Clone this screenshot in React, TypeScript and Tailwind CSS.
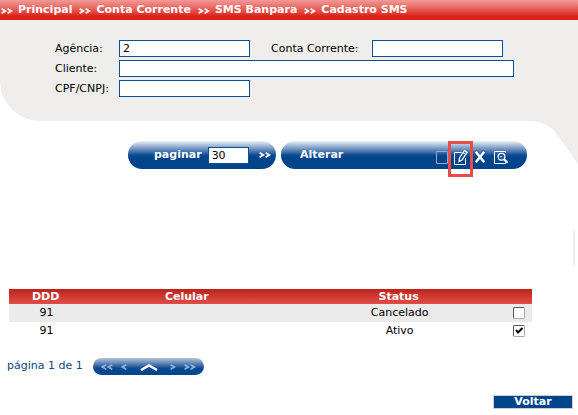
import { useState } from "react";
import type { ReactNode } from "react";

const crumbs = ["Principal", "Conta Corrente", "SMS Banpara", "Cadastro SMS"];

const rows = [
  { ddd: "91", celular: "", status: "Cancelado", checked: false },
  { ddd: "91", celular: "", status: "Ativo", checked: true },
];

const inputStyle =
  "h-[17px] border border-[#0a4f93] bg-white px-[3px] text-black outline-none";

const pillStyle =
  "flex h-7 items-center rounded-full bg-linear-to-b from-[#eef2f7] via-[#0b4c93] via-50% to-[#00458b] to-60% text-white";

function Chevrons({
  count = 2,
  left = false,
}: {
  count?: number;
  left?: boolean;
}) {
  const width = count * 6;
  return (
    <svg
      width={width}
      height="6"
      viewBox={`0 0 ${width} 6`}
      fill="none"
      stroke="currentColor"
      strokeWidth="1.7"
      className="shrink-0"
      aria-hidden="true"
    >
      {Array.from({ length: count }, (_, i) => (
        <path
          key={i}
          d={
            left
              ? `M${i * 6 + 5.2} 0.8L${i * 6 + 1.4} 3L${i * 6 + 5.2} 5.2`
              : `M${i * 6 + 0.6} 0.8L${i * 6 + 4.4} 3L${i * 6 + 0.6} 5.2`
          }
        />
      ))}
    </svg>
  );
}

function IconButton({ label, className = "", children }: { label: string; className?: string; children: ReactNode }) {
  return (
    <button type="button" aria-label={label} className={`flex shrink-0 items-center justify-center ${className}`}>
      {children}
    </button>
  );
}

function Breadcrumbs() {
  return (
    <nav className="flex h-5 items-center bg-linear-to-b from-[#f29a98] via-[#e5554f] via-50% to-[#dc2018] to-80% pt-px pl-px font-bold text-white">
      {crumbs.map((crumb) => (
        <a key={crumb} href="#" className="mr-[7px] flex items-center gap-[5px] whitespace-nowrap">
          <Chevrons />
          {crumb}
        </a>
      ))}
    </nav>
  );
}

function AccountForm() {
  return (
    <form className="relative h-[101px] rounded-bl-[40px] bg-[#efeeec] pt-5 pl-[55px]">
      <div className="grid grid-cols-[64px_131px_21px_101px_131px_auto] gap-y-[3px]">
        <label htmlFor="agencia" className="leading-[17px]">Agência:</label>
        <input id="agencia" defaultValue="2" className={inputStyle} />
        <label htmlFor="conta" className="col-start-4 leading-[17px]">Conta Corrente:</label>
        <input id="conta" defaultValue="" className={inputStyle} />
        <label htmlFor="cliente" className="col-start-1 leading-[17px]">Cliente:</label>
        <input id="cliente" defaultValue="" className={`${inputStyle} col-span-5 mr-16`} />
        <label htmlFor="cpf" className="leading-[17px]">CPF/CNPJ:</label>
        <input id="cpf" defaultValue="" className={inputStyle} />
      </div>
      <svg
        className="absolute top-full right-0"
        width="46"
        height="43"
        viewBox="0 0 46 43"
        fill="#efeeec"
        aria-hidden="true"
      >
        <path d="M0 0C11 1 18 5 24 12L46 43V0Z" />
      </svg>
    </form>
  );
}

function Toolbar() {
  return (
    <div className="mt-5 mr-[51px] ml-32 flex gap-[5px]">
      <div className={`${pillStyle} w-[148px] pr-[5px] pl-[26px]`}>
        <label htmlFor="paginar" className="pt-px font-bold">paginar</label>
        <input
          id="paginar"
          defaultValue="30"
          className="ml-[6px] h-[17px] w-[41px] border border-[#0a4f93] bg-white px-[3px] text-black outline-none"
        />
        <button type="button" aria-label="Ir" className="ml-auto">
          <Chevrons />
        </button>
      </div>
      <div className={`${pillStyle} relative flex-1 pr-[18px] pl-[19px]`}>
        <span className="pt-px font-bold">Alterar</span>
        <div className="mt-1 ml-auto flex items-center">
          <IconButton label="Novo" className="mr-[6px]">
            <svg width="13" height="16" viewBox="0 0 13 16" fill="none" stroke="#91aac8" aria-hidden="true">
              <path d="M1.5 2.5H12.5V14.5H1.5Z" />
            </svg>
          </IconButton>
          <IconButton label="Alterar" className="mr-[7px]">
            <svg width="14" height="17" viewBox="0 0 14 17" fill="none" stroke="#fff" aria-hidden="true">
              <path d="M7.5 3.5H.5V15.5H11.5V9" />
              <path d="M5 12.5L5.5 9L10.5 1.5L13 3.5L8 11Z" strokeWidth="1.3" />
              <path d="M9 3.5L12 6M5 10.5L7 12" />
            </svg>
          </IconButton>
          <IconButton label="Excluir" className="mr-[9px]">
            <svg width="10" height="16" viewBox="0 0 10 16" fill="none" stroke="#fff" strokeWidth="2.4" aria-hidden="true">
              <path d="M.8 2.8L9.2 13.2M9.2 2.8L.8 13.2" />
            </svg>
          </IconButton>
          <IconButton label="Consultar">
            <svg width="15" height="16" viewBox="0 0 15 16" fill="none" stroke="#fff" aria-hidden="true">
              <path d="M11.5 4V2.5H.5V14.5H11.5V13.5" />
              <circle cx="7.5" cy="7.8" r="3.4" strokeWidth="1.3" />
              <path d="M10 10.2L13.6 13.8" strokeWidth="2.2" />
              <path d="M6 7.8H8.5" />
            </svg>
          </IconButton>
        </div>
        <span className="pointer-events-none absolute top-0 right-[54px] h-9 w-[25px] border-3 border-[#e84c48]" />
      </div>
    </div>
  );
}

function PhoneTable() {
  const [checked, setChecked] = useState(rows.map((row) => row.checked));
  return (
    <div className="mr-[46px] ml-[9px]">
      <table className="w-full table-fixed border-collapse text-center">
        <thead className="h-[15px] bg-linear-to-b from-[#bf201b] to-[#df4d47] text-white">
          <tr>
            <th className="w-[14%] p-0 leading-[15px]">DDD</th>
            <th className="w-[40%] p-0 leading-[15px]">Celular</th>
            <th className="w-[41%] p-0 leading-[15px]">Status</th>
            <th className="w-[5%] p-0" />
          </tr>
        </thead>
        <tbody>
          {rows.map((row, i) => (
            <tr key={row.status} className="h-[18px] odd:bg-[#ebebeb]">
              <td className="p-0 pl-[2px] leading-[18px]">{row.ddd}</td>
              <td className="p-0 leading-[18px]">{row.celular}</td>
              <td className="p-0 pl-[2px] leading-[18px]">{row.status}</td>
              <td className="p-0">
                <label className="relative mx-auto block size-3">
                  <input
                    type="checkbox"
                    aria-label={row.status}
                    checked={checked[i]}
                    onChange={() => setChecked(checked.map((c, j) => (j === i ? !c : c)))}
                    className="peer block size-3 appearance-none rounded-[2px] border border-[#555] border-r-[#aaa] border-b-[#aaa] bg-white"
                  />
                  <svg
                    className="pointer-events-none absolute inset-0 hidden peer-checked:block"
                    width="12"
                    height="12"
                    viewBox="0 0 12 12"
                    fill="none"
                    stroke="#000"
                    strokeWidth="2"
                    aria-hidden="true"
                  >
                    <path d="M3 5L5 7.5L9.5 3" />
                  </svg>
                </label>
              </td>
            </tr>
          ))}
        </tbody>
      </table>
    </div>
  );
}

function Pager() {
  return (
    <div className="mt-[18px] ml-[7px] flex items-center">
      <span className="w-[86px] pb-[2px] leading-[15px] whitespace-nowrap text-[#0a4788]">página 1 de 1</span>
      <div className="flex h-[17px] w-[111px] items-center rounded-full bg-linear-to-b from-[#b5c5da] via-[#094a92] via-60% to-[#00458b] px-2 pt-px text-[#91b0d3]">
        <button type="button" aria-label="Primeira página"><Chevrons left /></button>
        <button type="button" aria-label="Página anterior" className="ml-2"><Chevrons count={1} left /></button>
        <button type="button" aria-label="Topo" className="mx-auto text-white">
          <svg width="18" height="7" viewBox="0 0 18 7" fill="none" stroke="currentColor" strokeWidth="2.4" aria-hidden="true">
            <path d="M1 6L9 1.5L17 6" />
          </svg>
        </button>
        <button type="button" aria-label="Próxima página" className="mr-2"><Chevrons count={1} /></button>
        <button type="button" aria-label="Última página"><Chevrons /></button>
      </div>
    </div>
  );
}

export default function App() {
  return (
    <main className="bg-white font-['DejaVu_Sans',Verdana,sans-serif] text-[11px] text-black">
      <Breadcrumbs />
      <AccountForm />
      <Toolbar />
      <div className="flex h-[120px] justify-end pt-[61px] pr-[3px]">
        <div className="h-9 w-[2px] rounded-full bg-[#eeeeee]" />
      </div>
      <PhoneTable />
      <Pager />
      <div className="mt-5 mr-[5px] flex justify-end">
        <button
          type="button"
          className="h-[14px] w-20 border border-[#ccd0d4] bg-[#00458b] font-bold leading-3 text-white"
        >
          Voltar
        </button>
      </div>
    </main>
  );
}
